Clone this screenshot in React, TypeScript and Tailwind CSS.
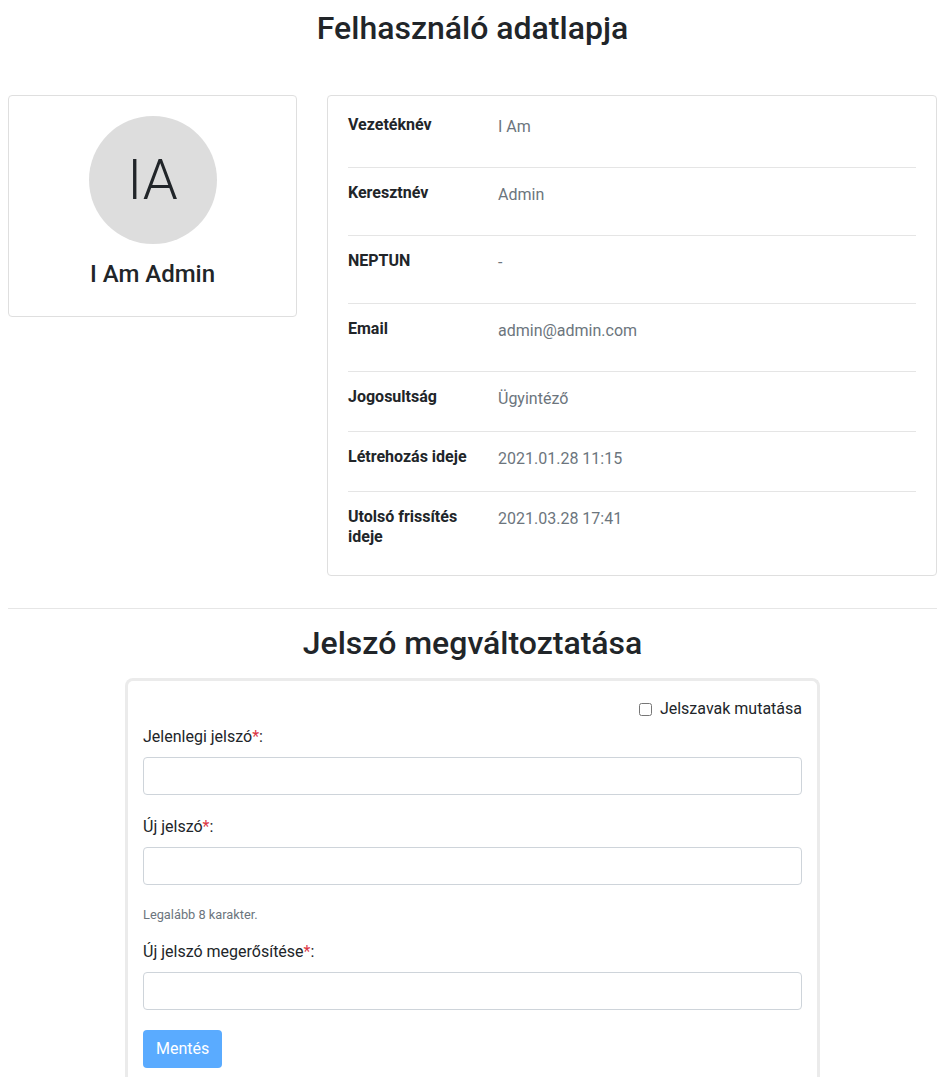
import React from 'react';

const rows = [
  { label: 'Vezetéknév', value: 'I Am', tall: true },
  { label: 'Keresztnév', value: 'Admin', tall: true },
  { label: 'NEPTUN', value: '-', tall: true },
  { label: 'Email', value: 'admin@admin.com', tall: true },
  { label: 'Jogosultság', value: 'Ügyintéző', tall: false },
  { label: 'Létrehozás ideje', value: '2021.01.28 11:15', tall: false },
  { label: 'Utolsó frissítés ideje', value: '2021.03.28 17:41', tall: false },
];

function Req() {
  return <span className="text-[#dc3545]">*</span>;
}

export default function App() {
  return (
    <div className="min-h-screen bg-white pl-2 pr-[10px] text-[#212529] font-['Roboto',_'Liberation_Sans',_sans-serif] text-base leading-6">
      <h2 className="mt-[9px] text-center text-[32px] font-medium leading-[1.2]">Felhasználó adatlapja</h2>

      {/* user details */}
      <div className="mt-[48px] flex items-start gap-[30px]">
        <div className="w-[289px] shrink-0 rounded border border-[#dfdfdf] pt-5 pb-[27px] flex flex-col items-center">
          <div className="w-32 h-32 rounded-full bg-[#dddddd] flex items-center justify-center text-[56px] font-light leading-none">
            IA
          </div>
          <div className="mt-4 text-2xl font-medium leading-[1.2]">I Am Admin</div>
        </div>

        <div className="flex-1 rounded border border-[#dfdfdf] px-5 pt-1 pb-[9px]">
          {rows.map((r, i) => (
            <div
              key={r.label}
              className={`flex items-start pt-[15px] ${i > 0 ? 'border-t border-[#e5e5e5]' : ''} ${r.tall ? 'pb-7' : 'pb-5'}`}
            >
              <div className="w-[150px] shrink-0 pr-4 font-bold leading-[1.2]">{r.label}</div>
              <div className="text-[#6c757d]">{r.value}</div>
            </div>
          ))}
        </div>
      </div>

      <hr className="mt-[32px] border-t border-[#e6e6e6]" />

      <h2 className="mt-[15px] text-center text-[32px] font-medium leading-[1.2]">Jelszó megváltoztatása</h2>

      {/* password form */}
      <div className="mx-auto mt-4 w-[695px] rounded-t-lg border-[3px] border-b-0 border-[#ebebeb] px-[15px] pt-4 pb-4">
        <div className="flex justify-end">
          <label className="flex items-center gap-2">
            <input type="checkbox" className="w-[13px] h-[13px]" />
            <span>Jelszavak mutatása</span>
          </label>
        </div>

        <label className="mt-1 block">
          Jelenlegi jelszó<Req />:
        </label>
        <input type="password" className="mt-2 block w-full h-[38px] rounded border border-[#ced4da] px-3" />

        <label className="mt-5 block">
          Új jelszó<Req />:
        </label>
        <input type="password" className="mt-2 block w-full h-[38px] rounded border border-[#ced4da] px-3" />
        <div className="mt-5 text-[12.8px] leading-[1.5] text-[#6c757d]">Legalább 8 karakter.</div>

        <label className="mt-4 block">
          Új jelszó megerősítése<Req />:
        </label>
        <input type="password" className="mt-2 block w-full h-[38px] rounded border border-[#ced4da] px-3" />

        <button className="mt-5 h-[38px] rounded bg-[#5aabff] px-[13px] text-white">Mentés</button>
      </div>
    </div>
  );
}
